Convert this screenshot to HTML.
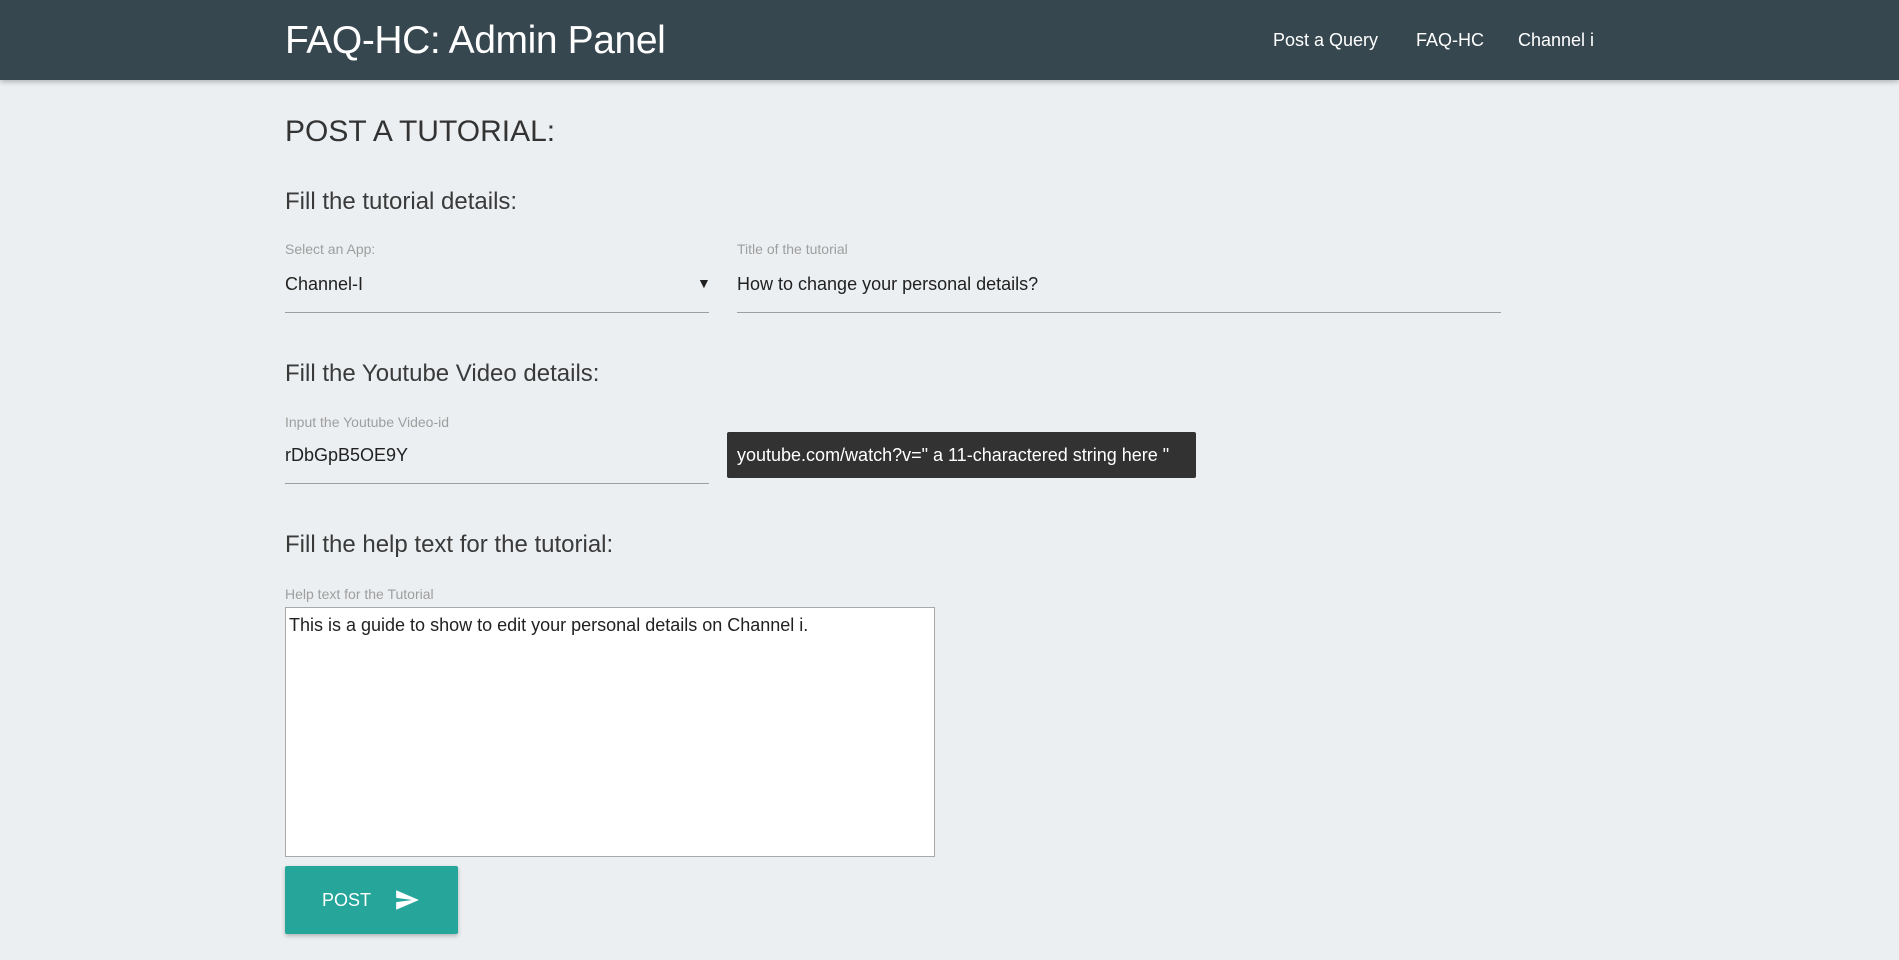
<!DOCTYPE html>
<html><head><meta charset="utf-8"><style>
*{box-sizing:border-box;margin:0;padding:0}
body{width:1899px;height:960px;overflow:hidden;background:#eceff1;font-family:"Liberation Sans",sans-serif;color:#212121;position:relative}
.hdr{position:absolute;left:0;top:0;width:1899px;height:80px;background:#37474f;box-shadow:0 2px 5px rgba(0,0,0,.25)}
.hdr .t{position:absolute;left:285px;top:19px;font-size:39px;color:#fff;letter-spacing:-0.4px}
.nav{position:absolute;top:30px;font-size:18px;color:#fff}
.a{position:absolute;white-space:nowrap}
.h4{font-size:30px;font-weight:300;color:#333}
.h5{font-size:24px;font-weight:300;color:#3a3a3a}
.lbl{font-size:14px;color:#9e9e9e}
.val{font-size:18px;color:#212121}
.line{position:absolute;height:1px;background:#9e9e9e}
</style></head><body>
<div class="hdr"><div class="t">FAQ-HC: Admin Panel</div>
<div class="nav" style="left:1273px">Post a Query</div>
<div class="nav" style="left:1416px">FAQ-HC</div>
<div class="nav" style="left:1518px">Channel i</div></div>
<div class="a h4" style="left:285px;top:115px">POST A TUTORIAL:</div>
<div class="a h5" style="left:285px;top:188px">Fill the tutorial details:</div>
<div class="a lbl" style="left:285px;top:241px">Select an App:</div>
<div class="a val" style="left:285px;top:274px">Channel-I</div>
<div class="a" style="left:697px;top:275px;font-size:14px">&#9660;</div>
<div class="line" style="left:285px;top:312px;width:424px"></div>
<div class="a lbl" style="left:737px;top:241px">Title of the tutorial</div>
<div class="a val" style="left:737px;top:274px">How to change your personal details?</div>
<div class="line" style="left:737px;top:312px;width:764px"></div>
<div class="a h5" style="left:285px;top:360px">Fill the Youtube Video details:</div>
<div class="a lbl" style="left:285px;top:414px">Input the Youtube Video-id</div>
<div class="a val" style="left:285px;top:445px">rDbGpB5OE9Y</div>
<div class="line" style="left:285px;top:483px;width:424px"></div>
<div class="a" style="left:727px;top:432px;width:469px;height:46px;background:#323232;border-radius:2px;color:#fff;font-size:18px;line-height:46px;padding-left:10px">youtube.com/watch?v=" a 11-charactered string here "</div>
<div class="a h5" style="left:285px;top:531px">Fill the help text for the tutorial:</div>
<div class="a lbl" style="left:285px;top:586px">Help text for the Tutorial</div>
<div class="a" style="left:285px;top:607px;width:650px;height:250px;background:#fff;border:1px solid #a9a9a9;font-size:18px;padding:7px 3px;color:#212121">This is a guide to show to edit your personal details on Channel i.</div>
<div class="a" style="left:285px;top:866px;width:173px;height:68px;background:#26a69a;border-radius:2px;box-shadow:0 2px 4px rgba(0,0,0,.25);color:#fff;font-size:18px">
<span style="position:absolute;left:37px;top:24px">POST</span>
<svg style="position:absolute;left:107px;top:21px" width="30" height="26" viewBox="0 0 24 24"><path d="M2 21l21-9L2 3v7l15 2-15 2z" fill="#fff"/></svg></div>
</body></html>
